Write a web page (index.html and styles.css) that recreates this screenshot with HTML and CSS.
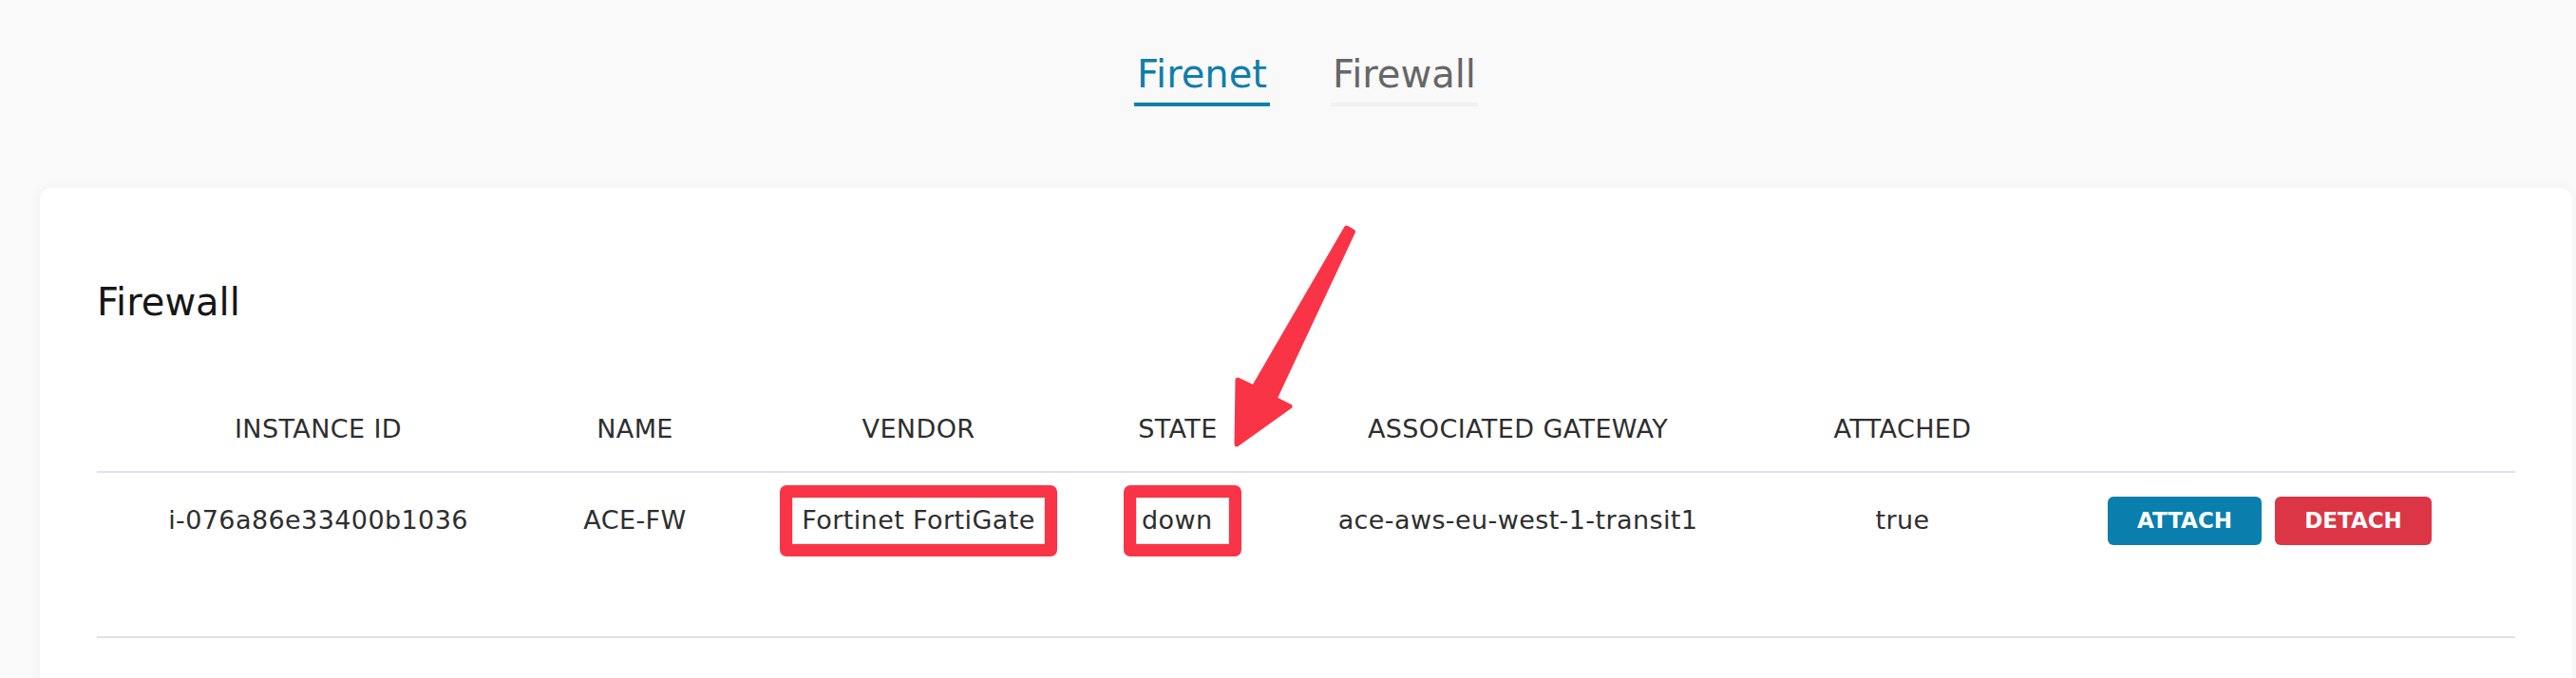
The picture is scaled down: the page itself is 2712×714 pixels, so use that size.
FILE: index.html
```html
<!DOCTYPE html>
<html lang="en">
<head>
<meta charset="utf-8">
<title>Firewall</title>
<link rel="stylesheet" href="styles.css">
</head>
<body>
<div class="page">
  <nav class="tabs">
    <a class="tab tab-active">Firenet</a>
    <a class="tab">Firewall</a>
  </nav>
  <section class="card">
    <h2 class="card-title">Firewall</h2>
    <div class="table">
      <div class="row row-head">
        <div class="cell">INSTANCE ID</div>
        <div class="cell">NAME</div>
        <div class="cell">VENDOR</div>
        <div class="cell">STATE</div>
        <div class="cell">ASSOCIATED GATEWAY</div>
        <div class="cell">ATTACHED</div>
        <div class="cell"></div>
      </div>
      <div class="row row-data">
        <div class="cell">i-076a86e33400b1036</div>
        <div class="cell">ACE-FW</div>
        <div class="cell"><span class="mark mark-vendor">Fortinet FortiGate</span></div>
        <div class="cell"><span class="mark mark-state">down</span></div>
        <div class="cell">ace-aws-eu-west-1-transit1</div>
        <div class="cell">true</div>
        <div class="cell actions">
          <button class="btn btn-attach">ATTACH</button>
          <button class="btn btn-detach">DETACH</button>
        </div>
      </div>
    </div>
    <hr class="divider">
  </section>
</div>
<svg class="annotation" width="2712" height="714" viewBox="0 0 2712 714" aria-hidden="true">
  <polygon points="1417.5,240 1320,408 1303,400 1302,468 1358,428 1342,420 1424.5,244" fill="#f93446" stroke="#f93446" stroke-width="5" stroke-linejoin="round"/>
</svg>
</body>
</html>
```

FILE: styles.css
```css
* { box-sizing: border-box; }

html, body {
  margin: 0;
  padding: 0;
}

body {
  position: relative;
  background: #f9f9f9;
  font-family: "DejaVu Sans", "Liberation Sans", sans-serif;
  color: #333;
  width: 2712px;
  height: 714px;
  overflow: hidden;
}

.page {
  padding: 0 4px 0 42px;
}

.tabs {
  display: flex;
  justify-content: center;
  gap: 64px;
  padding-top: 54px;
}

.tab {
  display: block;
  font-size: 40px;
  line-height: 48px;
  padding-bottom: 6px;
  border-bottom: 4px solid #f1f1f1;
  color: #666;
  text-align: center;
  white-space: nowrap;
}

.tab:first-child { width: 143px; }
.tab:last-child { width: 155px; }

.tab-active {
  color: #0f7eab;
  border-bottom-color: #0a7fad;
}

.card {
  margin-top: 86px;
  background: #fff;
  border-radius: 12px;
  box-shadow: 0 0 14px rgba(0, 0, 0, 0.035);
  padding: 96px 60px 60px;
}

.card-title {
  margin: 0 0 66px;
  font-size: 40px;
  line-height: 48px;
  font-weight: 400;
  color: #161616;
}

.row {
  display: grid;
  grid-template-columns: 466px 201px 396px 150px 566px 244px 521px;
  align-items: center;
  font-size: 27px;
  line-height: 36px;
  letter-spacing: 0.4px;
  color: #2e2e2e;
}

.cell {
  text-align: center;
  white-space: nowrap;
}

.row-head {
  border-bottom: 2px solid #dee2e6;
}

.row-head .cell {
  padding: 26px 0;
}

.row-data {
  height: 100px;
}

.mark {
  display: inline-block;
  border: 13px solid #f93446;
  border-radius: 7px;
  box-shadow: inset 0 0 0 1px #e4e4e4;
  padding: 6.5px 0;
  height: 75px;
}

.mark-vendor {
  width: 292px;
  text-align: center;
}

.mark-state {
  width: 124px;
  text-align: left;
  padding-left: 6px;
  margin-left: 10px;
}

.actions {
  display: flex;
  justify-content: center;
  gap: 14px;
  padding-left: 8px;
}

.btn {
  font-family: "DejaVu Sans", "Liberation Sans", sans-serif;
  font-weight: 700;
  font-size: 23px;
  letter-spacing: 0;
  color: #fff;
  height: 51px;
  padding: 0;
  border: none;
  border-radius: 6px;
  cursor: pointer;
  text-align: center;
}

.btn-attach { background: #0a7fad; width: 162px; }
.btn-detach { background: #dc3545; width: 165px; }

.divider {
  margin: 72px 0 0;
  border: none;
  border-top: 2px solid #e2e2e2;
  height: 0;
}

.annotation {
  position: absolute;
  top: 0;
  left: 0;
  pointer-events: none;
}
```
